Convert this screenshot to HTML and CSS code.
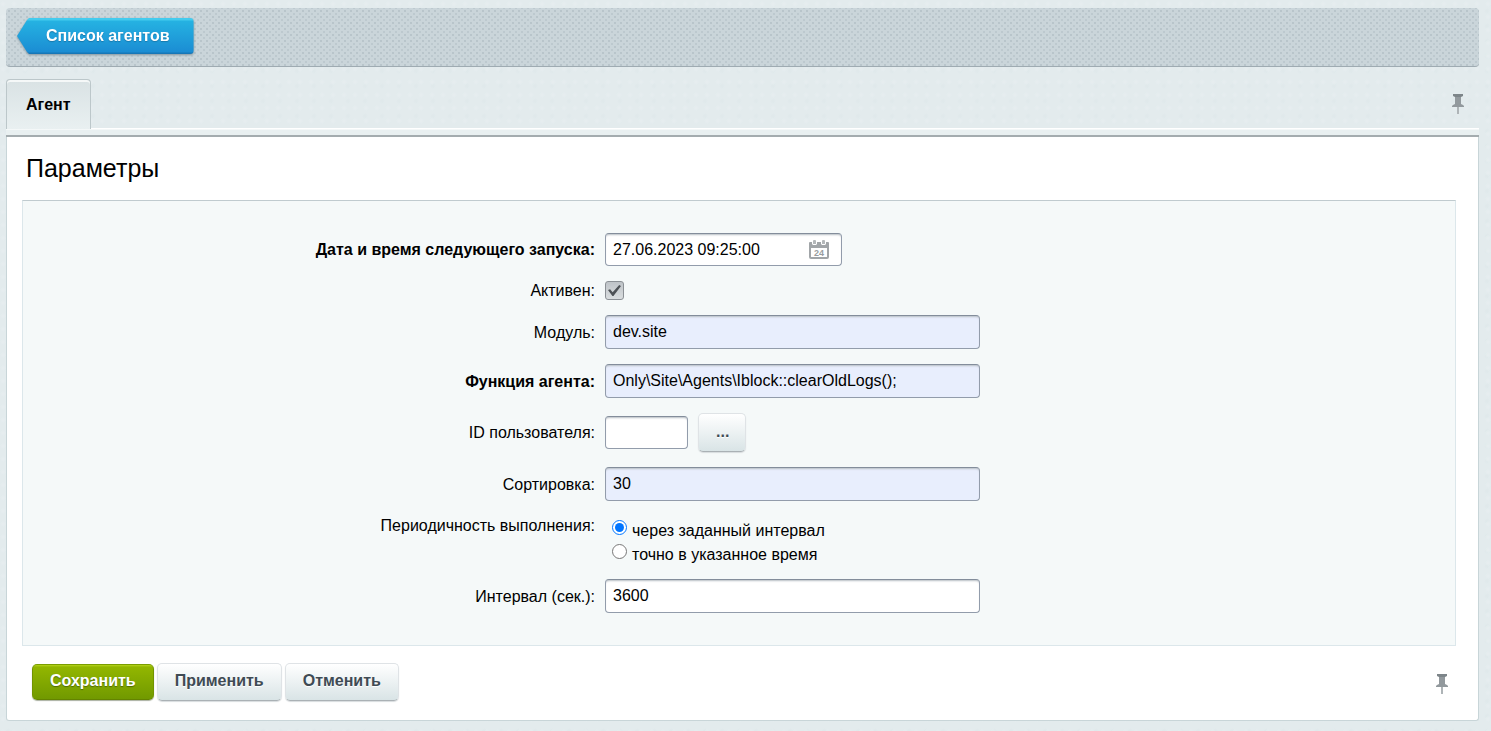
FILE: index.html
```html
<!DOCTYPE html>
<html lang="ru">
<head>
<meta charset="utf-8">
<meta name="viewport" content="width=device-width, initial-scale=1">
<title>Агент</title>
<link rel="stylesheet" href="styles.css">
</head>
<body>
<svg class="symbols" aria-hidden="true">
  <symbol id="pin" viewBox="0 0 12 20">
    <path class="pin-cap" d="M1 0h10v2L9 3v1H3V3L1 2z"/>
    <path class="pin-body" d="M3 3h6v7l2 1 1 1v1H0v-1l1-1 2-1z"/>
    <path class="pin-needle" d="M5 13h2v7H5z"/>
  </symbol>
</svg>

<nav class="toolbar">
  <a class="back" href="#agents"><span class="back-shape">Список агентов</span></a>
</nav>

<main class="editor">
  <div class="tabs" role="tablist">
    <button class="tab" type="button" role="tab" aria-selected="true">Агент</button>
    <button class="pin" type="button" aria-label="Закрепить панель"><svg class="pin-icon"><use href="#pin"/></svg></button>
  </div>

  <form class="panel">
    <h1 class="title">Параметры</h1>
    <div class="fields">
      <div class="row">
        <label class="label required" for="next">Дата и время следующего запуска:</label>
        <div class="value">
          <div class="date">
            <input class="date-input" id="next" type="text" value="27.06.2023 09:25:00">
            <button class="calendar" type="button" aria-label="Календарь">
              <svg class="calendar-icon" viewBox="0 0 20 19">
                <path d="M1 2h18q1 0 1 1v14q0 2-2 2H2q-2 0-2-2V3q0-1 1-1z" fill="#a1a5a8"/>
                <path d="M3 1h1v2q1 2 3 0V1h1v3L7 5H4L3 4zM12 1h1v2q1 2 3 0V1h1v3l-1 1h-3l-1-1z" fill="#fff"/>
                <path d="M4 1q0-1 1-1h1q1 0 1 1v3H4zM13 1q0-1 1-1h1q1 0 1 1v3h-3z" fill="#b4b8ba"/>
                <path d="M2 8h16v9H2z" fill="#fff"/>
                <text x="10" y="16" text-anchor="middle" class="calendar-day">24</text>
              </svg>
            </button>
          </div>
        </div>
      </div>
      <div class="row">
        <label class="label" for="active">Активен:</label>
        <div class="value"><input class="check" id="active" type="checkbox" checked></div>
      </div>
      <div class="row">
        <label class="label" for="module">Модуль:</label>
        <div class="value"><input class="input filled" id="module" type="text" value="dev.site"></div>
      </div>
      <div class="row">
        <label class="label required" for="func">Функция агента:</label>
        <div class="value"><input class="input filled" id="func" type="text" value="Only\Site\Agents\Iblock::clearOldLogs();"></div>
      </div>
      <div class="row">
        <label class="label" for="user">ID пользователя:</label>
        <div class="value">
          <input class="input short" id="user" type="text">
          <button class="button more" type="button" aria-label="Выбрать пользователя">...</button>
        </div>
      </div>
      <div class="row">
        <label class="label" for="sort">Сортировка:</label>
        <div class="value"><input class="input filled" id="sort" type="text" value="30"></div>
      </div>
      <div class="row top" role="radiogroup" aria-labelledby="period">
        <span class="label" id="period">Периодичность выполнения:</span>
        <div class="value options">
          <label class="option"><input class="radio" type="radio" name="period" checked><span class="option-text">через заданный интервал</span></label>
          <label class="option"><input class="radio" type="radio" name="period"><span class="option-text">точно в указанное время</span></label>
        </div>
      </div>
      <div class="row">
        <label class="label" for="interval">Интервал (сек.):</label>
        <div class="value"><input class="input" id="interval" type="text" value="3600"></div>
      </div>
    </div>
    <div class="actions">
      <button class="button save" type="submit">Сохранить</button>
      <button class="button" type="button">Применить</button>
      <button class="button" type="button">Отменить</button>
      <button class="pin" type="button" aria-label="Закрепить кнопки"><svg class="pin-icon"><use href="#pin"/></svg></button>
    </div>
  </form>
</main>
</body>
</html>
```
FILE: styles.css
```css
*, *::before, *::after { box-sizing: border-box; }

body {
  margin: 0;
  padding: 8px 12px 10px 6px;
  background-color: #e3ebed;
  background-image:
    radial-gradient(circle at 3px 4px, #e6edef 1px, transparent 3px),
    radial-gradient(circle at 8px 11px, #e0e9eb 1px, transparent 3px);
  background-size: 11px 13px, 17px 15px;
  color: #000;
  font: 16px/20px "Liberation Sans", Arial, sans-serif;
}

button, input { font: inherit; }
button { cursor: pointer; }

.symbols { position: absolute; width: 0; height: 0; }

.toolbar {
  display: flex;
  padding: 10px 11px 12px;
  border-bottom: 1px solid #9fabb2;
  border-radius: 4px;
  background-color: #cad5da;
  background-image:
    radial-gradient(circle, #b6c3c9 0, #bac6cc 1px, transparent 1px),
    radial-gradient(circle, #bdc9cf 0, #bdc9cf 1px, transparent 1px);
  background-size: 6px 6px;
  background-position: 0 0, 3px 3px;
}

.back {
  color: #fff;
  font-weight: bold;
  text-decoration: none;
  text-shadow: 0 1px 1px #1779ac;
  filter: drop-shadow(0 1px 1px #7f929c);
}

.back-shape {
  display: block;
  height: 36px;
  padding: 8px 24px 8px 29px;
  border-radius: 0 4px 4px 0;
  background: linear-gradient(#43cbee 0, #43cbee 2px, #25b2e2 3px, #1b8dd3 34px, #1777b7 35px);
  clip-path: polygon(12px 0, 100% 0, 100% 100%, 12px 100%, 10px 34px, 0 18px, 10px 2px);
}

.editor { margin-top: 12px; }

.tabs {
  display: flex;
  justify-content: space-between;
  align-items: flex-start;
  height: 58px;
  border-bottom: 2px solid #a4acaf;
  background: linear-gradient(transparent 49px, #fff 49px, #fff 50px, #e9f0f1 51px);
}

.tab {
  height: 50px;
  padding: 0 19px;
  border: 1px solid #bcc7ca;
  border-bottom: 0;
  border-radius: 4px 4px 0 0;
  background: linear-gradient(#d9e2e4, #e9f0f1);
  box-shadow: inset 0 2px 0 #f5f8f8;
  font-weight: bold;
}

.pin {
  display: flex;
  padding: 0;
  border: 0;
  background: none;
}

.tabs .pin { margin: 15px 15px 0 0; }
.actions .pin { margin: 4px 8px 0 auto; }

.pin-icon { width: 12px; height: 20px; }
.pin-cap { fill: #7d8589; }
.pin-body { fill: #92999d; }
.pin-needle { fill: #aeb4b7; }

.panel {
  padding: 16px 22px 19px 15px;
  border: 1px solid #c8d5d8;
  border-top: 0;
  border-radius: 0 0 3px 3px;
  background: #fff;
}

.title {
  margin: 0 4px 16px;
  font-size: 25px;
  font-weight: normal;
  line-height: 31px;
}

.fields {
  display: grid;
  gap: 15px;
  padding: 32px 2px 32px 0;
  border: 1px solid #dce7eb;
  border-top-color: #c0cbcf;
  background: #f5f9f9;
}

.row {
  display: grid;
  grid-template-columns: 40% 60%;
  align-items: center;
}

.row.top { align-items: start; }

.label {
  line-height: 19px;
  text-align: right;
}

.required { font-weight: bold; }

.value {
  display: flex;
  align-items: center;
  gap: 10px;
  padding-left: 10px;
}

.input, .date {
  width: 375px;
  height: 34px;
  border: 1px solid #929cab;
  border-top-color: #838d9b;
  border-radius: 4px;
  background: #fff;
  box-shadow: inset 0 2px 2px -1px #b8bec4;
}

.input { padding: 0 7px; }
.filled { background: #e8eefd; }
.short { width: 83px; height: 33px; }

.date {
  display: flex;
  align-items: center;
  width: 237px;
  height: 33px;
}

.date-input {
  flex: 1;
  min-width: 0;
  height: 31px;
  padding: 0 7px;
  border: 0;
  background: none;
}

.calendar {
  display: flex;
  margin-right: 12px;
  padding: 0;
  border: 0;
  background: none;
}

.calendar-icon { width: 20px; height: 19px; }
.calendar-day { fill: #999da0; font-size: 9px; font-weight: bold; }

.check {
  appearance: none;
  width: 19px;
  height: 19px;
  margin: 0;
  border: 1px solid #8b9095;
  border-radius: 3px;
  background: linear-gradient(#bfc4c8, #d9dddf);
}

.check:checked::before {
  content: "";
  display: block;
  width: 13px;
  height: 11px;
  margin: 3px 2px;
  background: #4d5256;
  clip-path: polygon(0 45%, 16% 38%, 36% 66%, 86% 0, 100% 10%, 42% 100%, 34% 100%);
}

.options {
  flex-direction: column;
  align-items: flex-start;
  gap: 0;
}

.option {
  display: flex;
  height: 24px;
  padding-left: 7px;
}

.radio { width: 15px; height: 15px; margin: 4px 5px 0 0; }
.option-text { padding-top: 5px; }

.actions {
  display: flex;
  align-items: center;
  gap: 3px;
  padding: 17px 0 0 10px;
}

.button {
  height: 38px;
  padding: 0 17px 2px;
  border: 1px solid #dfe3e6;
  border-bottom-color: #aab1b5;
  border-radius: 5px;
  background: linear-gradient(#fff, #d9e4e6);
  box-shadow: 0 1px 1px #d8dcde;
  color: #3f4b54;
  font-weight: bold;
  text-shadow: 0 1px 0 #fff;
}

.more { width: 48px; height: 39px; }

.save {
  height: 36px;
  border-color: #7b9e00 #729400 #648300;
  background: linear-gradient(#b6d51c 0, #92b600 2px, #719900);
  box-shadow: 0 1px 1px #a9b0a0;
  color: #fff;
  text-shadow: 0 1px 1px #4f6b00;
}
```
